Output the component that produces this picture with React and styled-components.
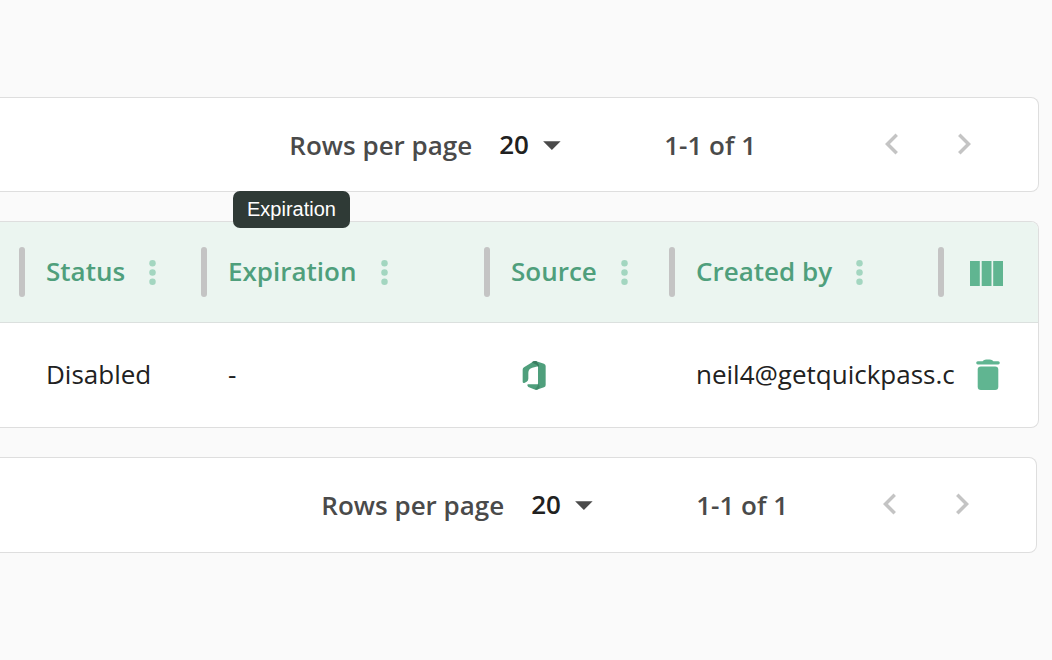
import React from "react";
import styled, { createGlobalStyle } from "styled-components";

const GlobalStyle = createGlobalStyle`
  *, *::before, *::after {
    box-sizing: border-box;
  }

  body {
    margin: 0;
    background: #fafafa;
    color: #212121;
    font-family: "Open Sans", "Noto Sans", sans-serif;
    font-size: 26px;
    line-height: 36px;
  }
`;

const Page = styled.main`
  display: flex;
  flex-direction: column;
  gap: 29px;
  padding: 97px 13px 97px 0;
  overflow: hidden;
`;

const Card = styled.section`
  border: 1px solid #dedede;
  border-left: 0;
  border-radius: 0 8px 8px 0;
  background: #fff;
`;

const Bar = styled(Card)`
  display: flex;
  align-items: center;
  justify-content: flex-end;
  height: ${(props) => (props.$bottom ? 96 : 95)}px;
  margin-right: ${(props) => (props.$bottom ? 2 : 0)}px;
  padding: 0 53px 2px 0;
  color: #4a4a4a;
  font-weight: 600;
`;

const Label = styled.label`
  margin-right: 27px;
  padding-top: 2px;
`;

const SelectBox = styled.div`
  display: grid;
  align-items: center;
  width: 73px;

  > * {
    grid-area: 1 / 1;
  }

  svg {
    justify-self: end;
    pointer-events: none;
  }
`;

const Select = styled.select`
  width: 100%;
  padding: 0;
  border: 0;
  appearance: none;
  background: transparent;
  color: #212121;
  font: inherit;
  cursor: pointer;
`;

const Range = styled.span`
  margin-left: 92px;
  margin-right: ${(props) => (props.$bottom ? 81 : 115)}px;
  padding-top: 2px;
`;

const Pager = styled.nav`
  display: flex;
  gap: 30px;
`;

const IconButton = styled.button`
  display: flex;
  padding: 0;
  border: 0;
  background: none;
  color: ${(props) => props.$color || "#60b591"};
  cursor: pointer;

  &:disabled {
    color: #c4c4c4;
    cursor: default;
  }
`;

const Table = styled.table`
  width: 100%;
  table-layout: fixed;
  border-collapse: separate;
  border-spacing: 0;
`;

const Column = styled.col`
  width: ${(props) => props.$width}px;
`;

const HeadCell = styled.th`
  height: 101px;
  padding: 0;
  border-bottom: 1px solid #dbe0de;
  background: #ebf5f0;
  color: #4f9f7c;
  font-weight: 600;
  text-align: left;

  &:first-child {
    padding-left: 19px;
  }

  &:last-child {
    border-top-right-radius: 7px;
  }
`;

const HeadContent = styled.div`
  display: flex;
  align-items: center;
  white-space: nowrap;
`;

const Separator = styled.span`
  width: 6px;
  height: 50px;
  margin-right: ${(props) => (props.$last ? 26 : 21)}px;
  border-radius: 3px;
  background: #c4c4c4;
`;

const HeadLabel = styled.span`
  position: relative;
  margin-right: 9px;
  padding-bottom: 2px;
`;

const Tooltip = styled.span`
  position: absolute;
  bottom: calc(100% + 25px);
  left: 5px;
  padding: 0 14px;
  border-radius: 7px;
  background: #2f3a36;
  color: #fff;
  font: 20px/37px "Liberation Sans", Arial, sans-serif;
`;

const Cell = styled.td`
  height: 104px;
  padding: 0 0 ${(props) => (props.$icon ? 0 : 2)}px 27px;
  white-space: nowrap;

  &:first-child {
    padding-left: 46px;
  }

  &:last-child {
    padding-left: 38px;
  }

  svg {
    display: block;
  }
`;

const SourceIcon = styled.span`
  display: block;
  padding-left: 11px;
`;

const ChevronIcon = ({ right }) => (
  <svg width="42" height="42" viewBox="0 0 24 24" fill="currentColor">
    {right ? (
      <path d="M8.59 16.59 13.17 12 8.59 7.41 10 6l6 6-6 6z" />
    ) : (
      <path d="M15.41 16.59 10.83 12l4.58-4.59L14 6l-6 6 6 6z" />
    )}
  </svg>
);

const ArrowIcon = () => (
  <svg width="42" height="42" viewBox="0 0 24 24" fill="#4a4a4a">
    <path d="m7.500 10.400 5 5 5-5z" />
  </svg>
);

const MoreIcon = () => (
  <svg width="37" height="37" viewBox="0 0 24 24" fill="currentColor">
    <circle cx="12" cy="6" r="2.1" />
    <circle cx="12" cy="12" r="2.1" />
    <circle cx="12" cy="18" r="2.1" />
  </svg>
);

const ColumnsIcon = () => (
  <svg width="33" height="27" viewBox="0 0 33 27" fill="currentColor">
    <path d="M0 2h9.8v25H0zM11.7 2h9.8v25h-9.8zM23.2 2H33v25h-9.8z" />
  </svg>
);

const TrashIcon = () => (
  <svg width="24" height="32" viewBox="0 0 24 32" fill="currentColor">
    <path d="M6.6 2.2C8 .9 9.700.6 12 .6s4 .3 5.400 1.600h4.800a1.500 1.500 0 0 1 0 3.200H1.800a1.500 1.500 0 0 1 0-3.200z" />
    <rect x="1.700" y="7.400" width="20.600" height="23.600" rx="3.200" />
  </svg>
);

const OfficeIcon = () => (
  <svg width="24" height="31" viewBox="36 30 72 93">
    <path
      fill="#4f9f7c"
      d="M38 59q0-5 4-7l27-17q5-3 10-1l23 7q5 2 5 7v57q0 6-5 7l-22 7q-4 1-8-1l-17-7q-5-4-2-8h31V49l-17 4q-12 3-12 15v18q0 6-5 9l-7 4q-5 1-5-4z"
    />
    <path fill="#3a7d60" d="m65 37 5-3q5-2 9-1l8 12q0 4-3 6-1-7-9-9z" />
    <path fill="#438a6b" d="M84 100q0 11-10 18l6 1q9-2 9-11z" />
  </svg>
);

const columns = [
  { name: "Status" },
  { name: "Expiration", tooltip: true },
  { name: "Source" },
  { name: "Created by" },
];

const Pagination = ({ id, bottom }) => (
  <Bar $bottom={bottom}>
    <Label htmlFor={id}>Rows per page</Label>
    <SelectBox>
      <Select id={id} defaultValue="20">
        <option value="20">20</option>
      </Select>
      <ArrowIcon />
    </SelectBox>
    <Range $bottom={bottom}>1-1 of 1</Range>
    <Pager aria-label="Pagination">
      <IconButton type="button" aria-label="Previous page" disabled>
        <ChevronIcon />
      </IconButton>
      <IconButton type="button" aria-label="Next page" disabled>
        <ChevronIcon right />
      </IconButton>
    </Pager>
  </Bar>
);

const App = () => (
  <>
    <GlobalStyle />
    <Page>
      <Pagination id="rows-top" />
      <Card>
        <Table>
          <colgroup>
            <Column $width={201} />
            <Column $width={283} />
            <Column $width={185} />
            <col />
            <Column $width={100} />
          </colgroup>
          <thead>
            <tr>
              {columns.map(({ name, tooltip }) => (
                <HeadCell key={name} scope="col">
                  <HeadContent>
                    <Separator />
                    <HeadLabel>
                      {name}
                      {tooltip && <Tooltip role="tooltip">{name}</Tooltip>}
                    </HeadLabel>
                    <IconButton
                      type="button"
                      $color="#a3d6c0"
                      aria-label={`${name} menu`}
                    >
                      <MoreIcon />
                    </IconButton>
                  </HeadContent>
                </HeadCell>
              ))}
              <HeadCell scope="col">
                <HeadContent>
                  <Separator $last />
                  <IconButton type="button" aria-label="Choose columns">
                    <ColumnsIcon />
                  </IconButton>
                </HeadContent>
              </HeadCell>
            </tr>
          </thead>
          <tbody>
            <tr>
              <Cell>Disabled</Cell>
              <Cell>-</Cell>
              <Cell $icon>
                <SourceIcon role="img" aria-label="Office">
                  <OfficeIcon />
                </SourceIcon>
              </Cell>
              <Cell>neil4@getquickpass.c</Cell>
              <Cell $icon>
                <IconButton type="button" aria-label="Delete">
                  <TrashIcon />
                </IconButton>
              </Cell>
            </tr>
          </tbody>
        </Table>
      </Card>
      <Pagination id="rows-bottom" bottom />
    </Page>
  </>
);

export default App;
